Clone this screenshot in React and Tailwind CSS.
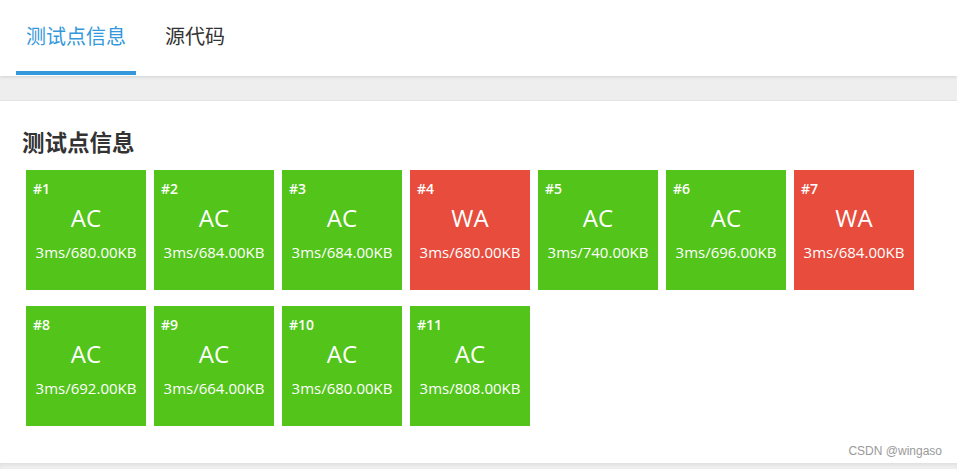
import React from "react";

const cases = [
  { id: 1, s: "AC", t: "3ms/680.00KB" },
  { id: 2, s: "AC", t: "3ms/684.00KB" },
  { id: 3, s: "AC", t: "3ms/684.00KB" },
  { id: 4, s: "WA", t: "3ms/680.00KB" },
  { id: 5, s: "AC", t: "3ms/740.00KB" },
  { id: 6, s: "AC", t: "3ms/696.00KB" },
  { id: 7, s: "WA", t: "3ms/684.00KB" },
  { id: 8, s: "AC", t: "3ms/692.00KB" },
  { id: 9, s: "AC", t: "3ms/664.00KB" },
  { id: 10, s: "AC", t: "3ms/680.00KB" },
  { id: 11, s: "AC", t: "3ms/808.00KB" },
];

const latin = { fontFamily: '"Open Sans", "Noto Sans CJK SC", sans-serif' };
const cjk = { fontFamily: '"Noto Sans CJK SC", "Open Sans", sans-serif' };

export default function App() {
  return (
    <div className="w-[957px] h-[469px] bg-white overflow-hidden flex flex-col" style={cjk}>
      <div className="h-[76px] bg-white relative z-10 shadow-[0_1px_3px_rgba(0,0,0,0.12)] flex items-stretch pl-4">
        <div className="h-[75px] px-[10px] flex items-center border-b-4 border-[#3498db] text-[20px] text-[#3498db] leading-none">
          测试点信息
        </div>
        <div className="h-[75px] ml-[19px] px-[10px] flex items-center border-b-4 border-transparent text-[20px] text-[#333] leading-none">
          源代码
        </div>
      </div>
      <div className="h-[25px] bg-[#eeeeee] border-b border-[#e4e4e4]" />
      <div className="flex-1 bg-white relative">
        <div className="pl-[22px] pt-[24px] text-[22.5px] font-bold text-[#333] leading-[32px]">测试点信息</div>
        <div className="mt-[13px] ml-[26px] w-[900px] flex flex-wrap gap-x-2 gap-y-4" style={latin}>
          {cases.map((c) => (
            <div
              key={c.id}
              className={`w-[120px] h-[120px] text-white flex flex-col pt-[10px] ${c.s === "AC" ? "bg-[#52c41a]" : "bg-[#e74c3c]"}`}
            >
              <div className="pl-[7px] text-[14px] font-semibold leading-[18px]">#{c.id}</div>
              <div className="mt-[5px] text-center text-[24px] leading-[30px]">{c.s}</div>
              <div className="mt-[9px] text-center text-[15px] font-medium leading-[20px]">{c.t}</div>
            </div>
          ))}
        </div>
        <div
          className="absolute right-[15px] bottom-[4px] text-[12px] text-[#999] leading-[16px]"
          style={{ fontFamily: '"Liberation Sans", Arial, sans-serif' }}
        >
          CSDN @wingaso
        </div>
      </div>
      <div className="h-[6px] bg-[#eeeeee] shadow-[inset_0_2px_3px_rgba(0,0,0,0.06)]" />
    </div>
  );
}
